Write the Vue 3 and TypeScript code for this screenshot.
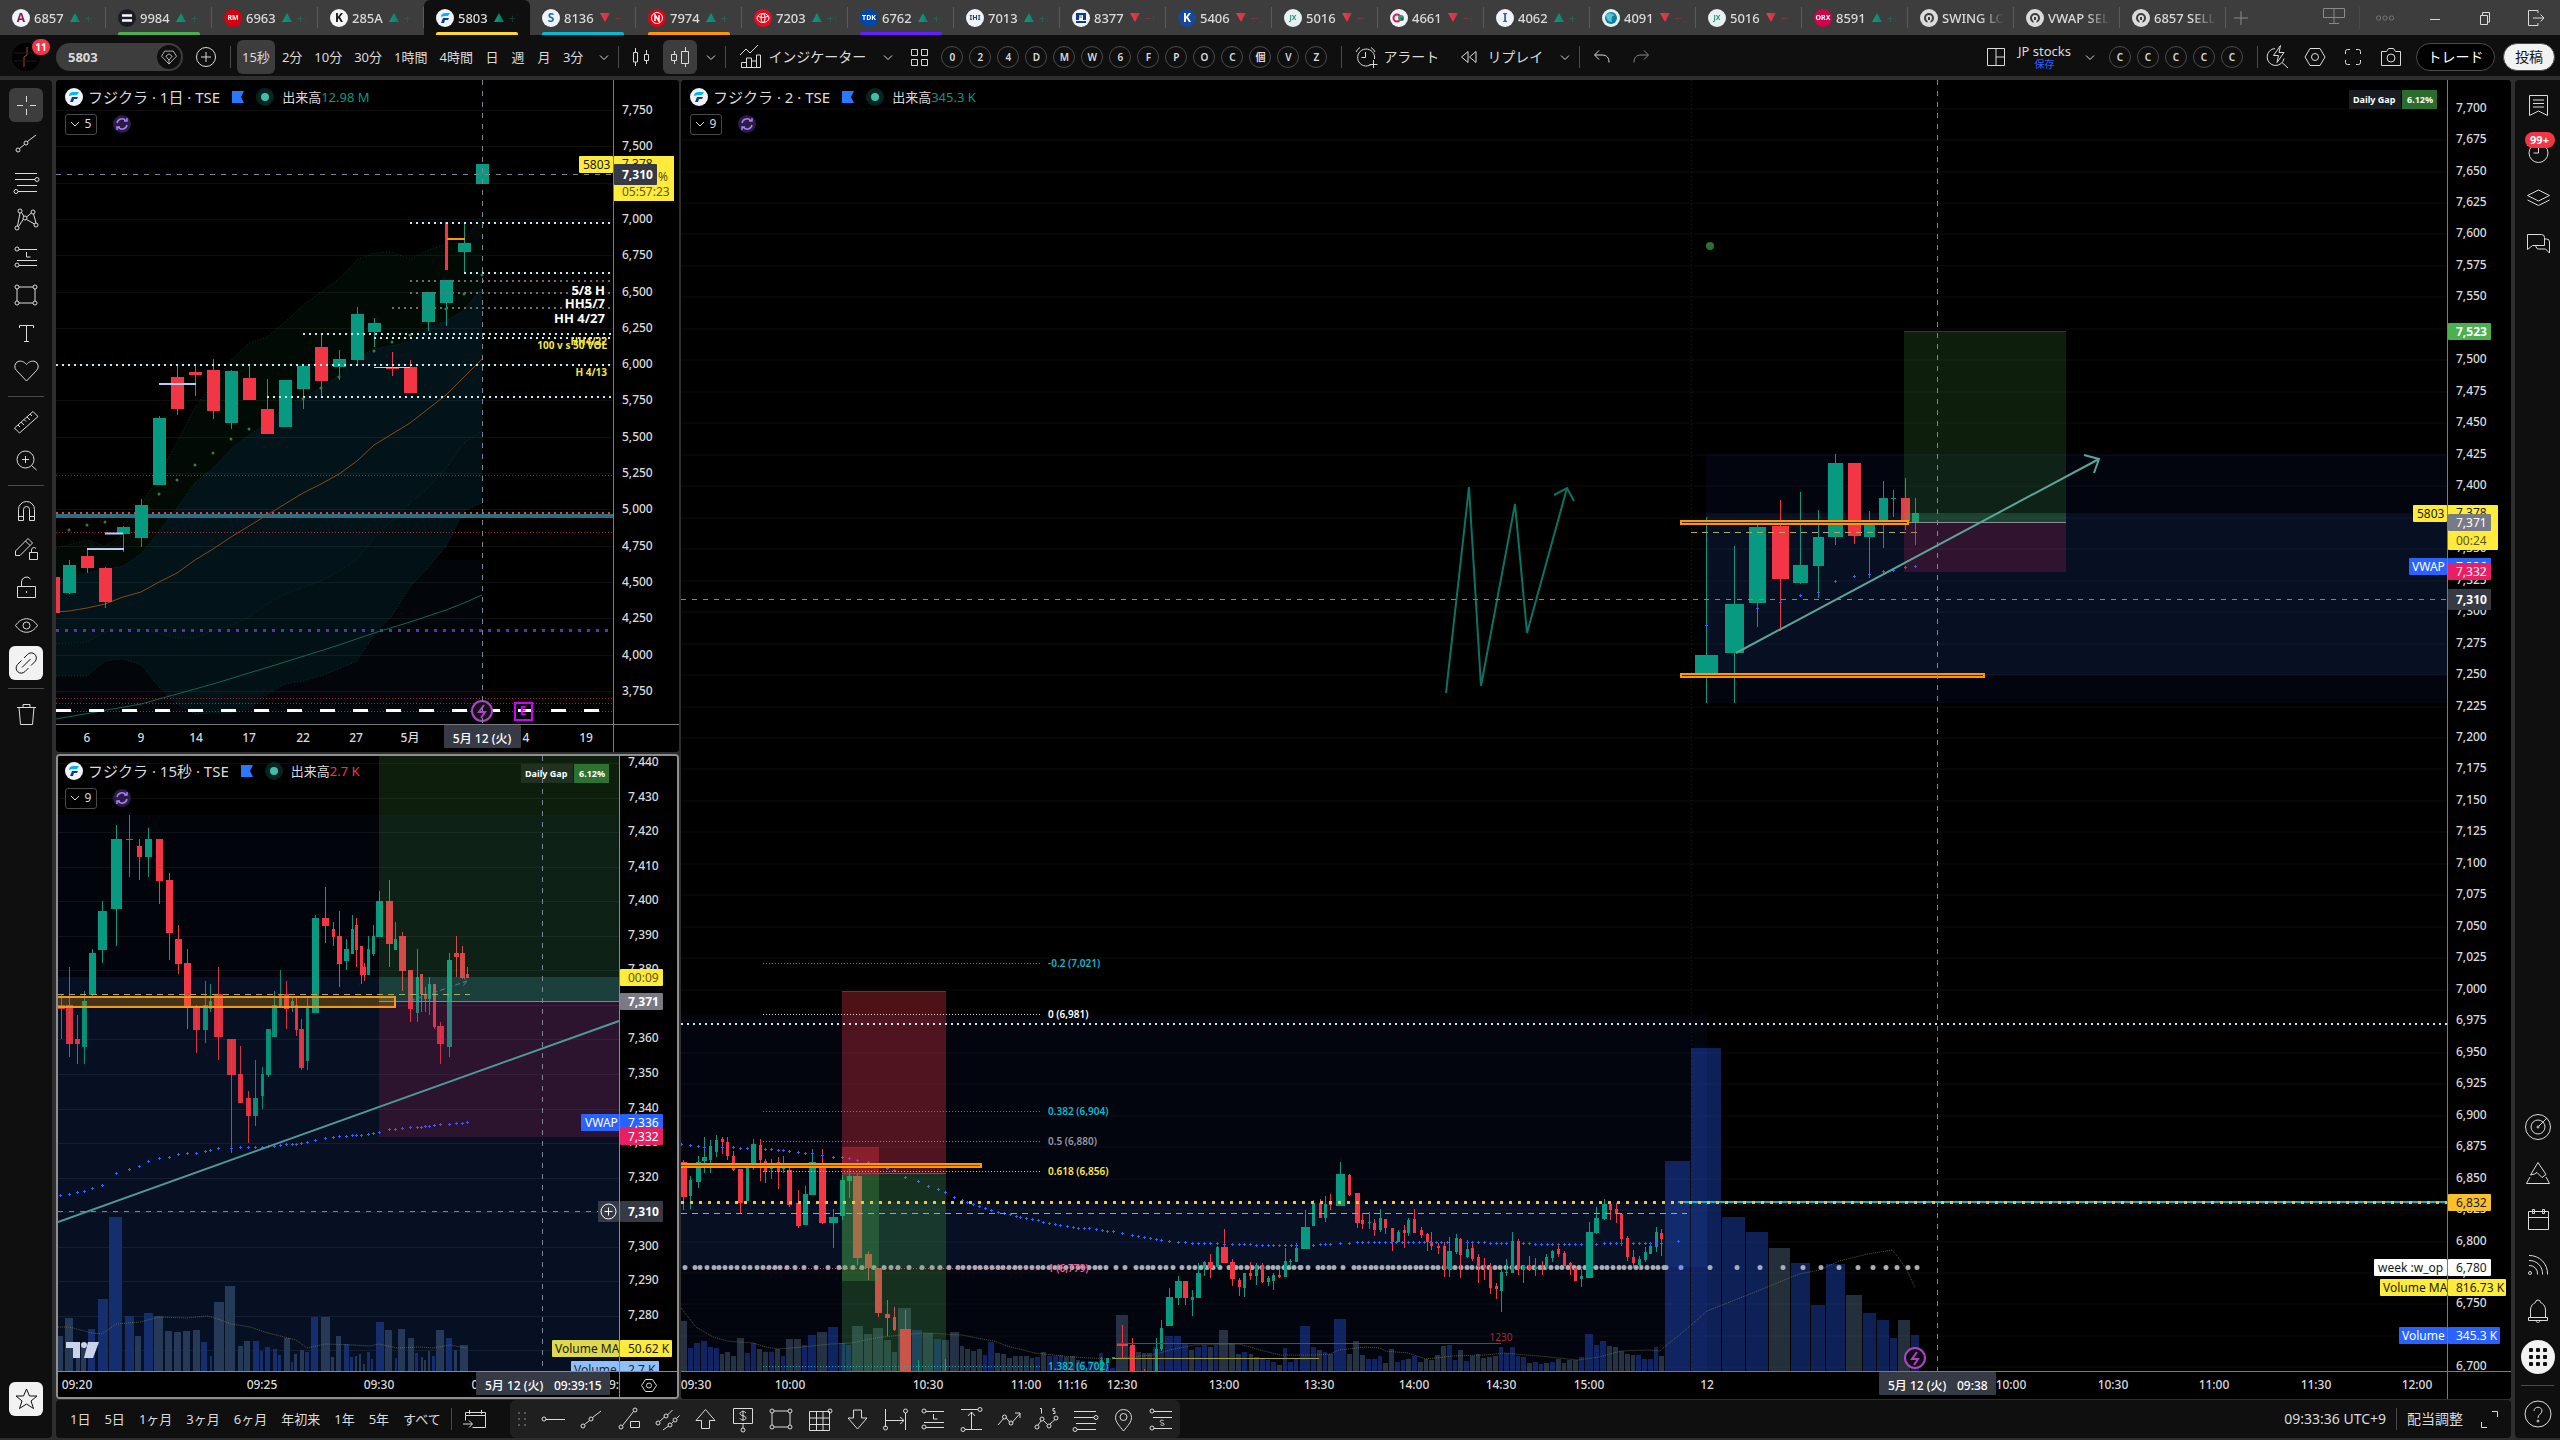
<script setup lang="ts">
type Bar = [number, number, number, number, number, number, number]
type Vol = [number, number, number, number]
interface Frame { x: number; y: number; kx: number; ky: number }
interface Tag { x: number; y: number; w: number; h: number; bg: string; fg?: string; t?: string; tx?: number; b?: boolean }

const UP = '#089981'
const DOWN = '#f23645'

const dayF: Frame = { x: 0, y: 80, kx: 3, ky: 2.306 }
const secF: Frame = { x: 0, y: 740, kx: 3, ky: 2.24 }
const amF: Frame = { x: 680, y: 940, kx: 2.45, ky: 3 }
const pmF: Frame = { x: 1300, y: 940, kx: 2.306, ky: 3 }
const nowF: Frame = { x: 1400, y: 220, kx: 2.063, ky: 3 }

const px = (f: Frame, x: number) => Math.round(f.x + x / f.kx)
const py = (f: Frame, y: number) => Math.round(f.y + y / f.ky)

function candles(f: Frame, rows: Bar[]) {
  return rows.map(([c, w, t, b, wt, wb, up]) => {
    const cx = px(f, c)
    let pw = Math.max(1, Math.round(w / f.kx))
    if (pw > 1 && pw % 2 === 0) pw += 1
    const y = py(f, t)
    const wy = py(f, wt)
    return {
      x: cx - (pw - 1) / 2, w: pw, y, h: Math.max(1, py(f, b) - y),
      cx, wy, wh: Math.max(1, py(f, wb) - wy), c: up ? UP : DOWN,
    }
  })
}
function volumes(f: Frame, rows: Vol[], base: number) {
  return rows.map(([a, b, t, blue]) => {
    const x = px(f, a)
    const y = py(f, t)
    return { x, y, w: Math.max(1, px(f, b) - x), h: base - y, blue: !!blue }
  })
}
function pts(f: Frame, flat: number[]) {
  const out: [number, number][] = []
  for (let i = 0; i < flat.length; i += 2) out.push([px(f, flat[i]), py(f, flat[i + 1])])
  return out
}
const line = (p: [number, number][]) => 'M' + p.map((q) => q.join(' ')).join('L')
const plus = (p: [number, number][]) => p.map(([x, y]) => `M${x - 1} ${y + 0.5}h3M${x + 0.5} ${y - 1}v3`).join('')
const repeat = (from: number, to: number, step: number, y: number) => {
  const out: number[] = []
  for (let x = from; x <= to; x += step) out.push(x, y)
  return out
}

/* ---------- daily ---------- */
const dayCandles = candles(dayF, [
  [170, 15, 1146, 1228, 1146, 1228, 0], [208, 39, 1118, 1183, 1107, 1185, 1], [262, 39, 1098, 1125, 1080, 1137, 0],
  [316, 39, 1125, 1204, 1123, 1218, 0], [370, 39, 1031, 1046, 1028, 1088, 1], [424, 39, 980, 1056, 966, 1077, 1],
  [478, 39, 779, 934, 775, 934, 1], [532, 39, 685, 759, 655, 772, 0], [586, 39, 673, 680, 659, 729, 0],
  [640, 39, 669, 763, 643, 782, 0], [694, 39, 671, 791, 669, 805, 1], [748, 39, 687, 738, 659, 738, 0],
  [802, 39, 759, 816, 689, 816, 0], [856, 39, 692, 800, 692, 800, 1], [910, 39, 659, 713, 659, 759, 1],
  [964, 39, 616, 694, 583, 729, 0], [1018, 39, 643, 662, 622, 692, 1], [1072, 39, 540, 646, 523, 656, 1],
  [1123, 39, 560, 581, 549, 616, 1], [1177, 39, 663, 666, 627, 683, 0], [1231, 39, 662, 722, 646, 722, 0],
  [1285, 39, 489, 558, 489, 579, 1], [1339, 39, 461, 514, 461, 567, 1], [1339, 9, 327, 438, 327, 438, 0],
  [1393, 39, 376, 397, 329, 442, 1], [1447, 39, 194, 240, 194, 240, 1],
])
const dayDots = pts(dayF, [208, 1038, 262, 1027, 316, 1020, 370, 1004, 478, 955, 532, 923, 586, 888, 640, 861, 694, 829, 748, 805, 910, 735, 964, 711, 1018, 686, 1123, 626, 1177, 605, 1231, 589, 1339, 529, 1393, 494, 1447, 450])
const dayMa = line(pts(dayF, [168, 1227, 208, 1225, 262, 1218, 316, 1208, 370, 1193, 424, 1181, 478, 1158, 532, 1136, 586, 1108, 640, 1081, 694, 1054, 748, 1028, 802, 1004, 856, 977, 910, 953, 964, 932, 1018, 908, 1072, 878, 1123, 842, 1177, 816, 1231, 790, 1285, 759, 1339, 726, 1393, 685, 1447, 643]))
const dayLong = line(pts(dayF, [168, 1473, 424, 1439, 640, 1393, 856, 1342, 1018, 1304, 1123, 1275, 1231, 1250, 1339, 1222, 1393, 1206, 1447, 1188]))
const bandTop = pts(dayF, [168, 1080, 262, 1061, 316, 1075, 370, 1050, 424, 980, 478, 910, 532, 835, 586, 755, 640, 700, 694, 645, 748, 607, 802, 593, 856, 558, 910, 520, 964, 490, 1018, 458, 1072, 415, 1123, 400, 1177, 397, 1231, 413, 1285, 392, 1339, 378, 1393, 376, 1447, 309])
const bandIn = pts(dayF, [168, 1155, 262, 1137, 370, 1120, 424, 1094, 532, 987, 586, 930, 640, 895, 694, 850, 748, 818, 802, 790, 856, 757, 910, 730, 964, 710, 1018, 680, 1072, 640, 1123, 620, 1231, 605, 1285, 570, 1339, 555, 1393, 530, 1447, 480])
const bandInLow = pts(dayF, [168, 1300, 262, 1296, 316, 1272, 370, 1265, 424, 1265, 532, 1286, 586, 1286, 640, 1270, 694, 1260, 748, 1238, 802, 1208, 856, 1185, 964, 1155, 1018, 1133, 1072, 1105, 1123, 1055, 1231, 975, 1285, 940, 1339, 895, 1393, 838, 1447, 810])
const bandLow = pts(dayF, [168, 1375, 262, 1375, 316, 1340, 370, 1336, 424, 1350, 478, 1400, 532, 1440, 586, 1462, 640, 1460, 694, 1460, 748, 1450, 802, 1415, 856, 1393, 910, 1387, 964, 1375, 1018, 1358, 1072, 1340, 1123, 1280, 1177, 1237, 1231, 1168, 1285, 1125, 1339, 1075, 1393, 995, 1447, 975])
const area = (a: [number, number][], b: [number, number][]) => line([...a, ...[...b].reverse()]) + 'Z'
const dayAxis = Array.from({ length: 17 }, (_, i) => ({ y: Math.round(110 + i * 36.31), t: (7750 - i * 250).toLocaleString('en-US') }))
const dayTimes: [number, string][] = [[87, '6'], [141, '9'], [196, '14'], [249, '17'], [303, '22'], [356, '27'], [410, '5月'], [526, '4'], [586, '19']]
const dayLevels: [number, number, string][] = [
  [410, 222, '#b9f0f0'], [464, 272, '#b9f0f0'], [410, 280, '#6b6e72'], [410, 292, '#6b6e72'], [392, 307, '#6b6e72'],
  [303, 333, '#b9f0f0'], [374, 337, '#b9f0f0'], [56, 364, '#b9f0f0'], [267, 396, '#b9f0f0'],
]

/* ---------- 15 seconds ---------- */
const secCandles = candles(secF, [
  [183, 18, 594, 603, 572, 670, 0], [208, 21, 594, 681, 508, 710, 0], [232, 15, 670, 681, 616, 726, 0], [253, 15, 585, 688, 562, 726, 1],
  [277, 21, 477, 571, 468, 573, 1], [307, 27, 383, 470, 361, 500, 1], [349, 33, 222, 379, 190, 461, 1], [388, 21, 221, 223, 168, 307, 1],
  [418, 15, 237, 262, 222, 314, 0], [445, 21, 222, 262, 197, 307, 1], [478, 21, 222, 316, 222, 367, 0], [508, 21, 314, 432, 298, 493, 0],
  [535, 21, 446, 502, 414, 524, 0], [562, 21, 500, 598, 468, 647, 0], [589, 21, 598, 650, 594, 701, 0], [616, 15, 594, 650, 540, 679, 1],
  [631, 9, 585, 603, 547, 609, 1], [655, 27, 570, 665, 508, 717, 0], [694, 27, 670, 750, 670, 925, 0], [721, 15, 748, 813, 685, 813, 0],
  [745, 15, 802, 842, 786, 903, 0], [766, 15, 802, 842, 717, 865, 1], [787, 9, 748, 797, 732, 827, 1], [805, 15, 647, 750, 647, 755, 1],
  [823, 15, 594, 665, 562, 665, 1], [841, 9, 570, 598, 515, 600, 1], [859, 15, 569, 603, 540, 647, 0], [877, 9, 585, 598, 576, 609, 1],
  [889, 9, 594, 650, 576, 663, 0], [904, 15, 647, 735, 625, 739, 0], [922, 9, 598, 719, 576, 739, 1], [946, 21, 399, 612, 392, 612, 1],
  [976, 21, 399, 417, 329, 455, 0], [1000, 9, 423, 441, 408, 461, 0], [1018, 12, 439, 502, 383, 553, 0], [1039, 15, 468, 495, 446, 515, 1],
  [1057, 9, 423, 479, 392, 479, 1], [1069, 9, 414, 470, 399, 508, 0], [1084, 9, 461, 526, 461, 547, 0], [1093, 9, 508, 526, 500, 540, 0],
  [1105, 9, 468, 526, 439, 526, 1], [1120, 9, 439, 479, 414, 484, 1], [1138, 21, 361, 441, 338, 441, 1], [1168, 21, 361, 457, 314, 508, 0],
  [1186, 9, 446, 470, 408, 470, 1], [1207, 21, 439, 517, 430, 562, 0], [1231, 15, 515, 603, 515, 632, 0], [1252, 9, 530, 612, 468, 632, 1],
  [1264, 9, 524, 570, 524, 609, 0], [1276, 9, 569, 580, 553, 609, 0], [1288, 9, 547, 580, 531, 616, 1], [1303, 9, 547, 643, 547, 647, 0],
  [1321, 21, 641, 681, 632, 726, 0], [1348, 15, 493, 688, 477, 710, 1], [1369, 15, 477, 486, 439, 531, 0], [1387, 15, 477, 533, 461, 535, 0],
  [1402, 9, 524, 533, 508, 533, 0],
])
const secVol = volumes(secF, [
  [174, 189, 1335, 0], [195, 219, 1295, 0], [228, 240, 1350, 0], [243, 258, 1350, 0], [264, 285, 1319, 1], [294, 324, 1252, 1], [327, 366, 1068, 1],
  [375, 402, 1290, 1], [405, 423, 1335, 0], [432, 459, 1284, 1], [462, 489, 1291, 0], [495, 516, 1324, 0], [522, 543, 1326, 0], [549, 570, 1324, 0],
  [579, 600, 1322, 0], [603, 621, 1348, 1], [630, 636, 1380, 1], [642, 672, 1259, 0], [675, 705, 1223, 0], [714, 729, 1357, 0], [732, 750, 1346, 0],
  [759, 777, 1346, 1], [780, 789, 1369, 1], [795, 810, 1360, 1], [819, 831, 1364, 1], [834, 843, 1378, 1], [852, 870, 1340, 0], [873, 879, 1393, 1],
  [882, 891, 1375, 0], [900, 912, 1366, 0], [915, 927, 1371, 1], [933, 954, 1292, 1], [963, 990, 1292, 0], [993, 1002, 1382, 0], [1008, 1023, 1335, 0],
  [1032, 1047, 1353, 1], [1050, 1059, 1382, 1], [1065, 1071, 1380, 0], [1077, 1083, 1375, 0], [1089, 1095, 1398, 0], [1101, 1110, 1371, 1],
  [1113, 1119, 1387, 1], [1128, 1152, 1304, 1], [1155, 1176, 1322, 0], [1185, 1191, 1384, 1], [1194, 1215, 1319, 0], [1224, 1242, 1340, 0],
  [1245, 1254, 1373, 1], [1263, 1269, 1382, 0], [1272, 1278, 1389, 0], [1284, 1290, 1369, 0], [1296, 1305, 1380, 1], [1308, 1332, 1322, 0],
  [1338, 1356, 1340, 1], [1362, 1371, 1366, 0], [1380, 1403, 1355, 0],
], 1371)
const secVwap = plus(pts(secF, [181, 1020, 208, 1016, 232, 1013, 253, 1011, 277, 1004, 307, 996, 349, 969, 388, 960, 418, 955, 445, 944, 478, 937, 508, 933, 535, 928, 562, 926, 589, 924, 616, 921, 631, 919, 655, 914, 694, 913, 721, 912, 745, 912, 766, 911, 787, 911, 805, 910, 823, 909, 841, 908, 859, 906, 877, 905, 889, 904, 904, 903, 922, 901, 946, 897, 976, 892, 1000, 890, 1018, 888, 1039, 886, 1057, 885, 1069, 884, 1084, 884, 1105, 882, 1120, 881, 1138, 877, 1168, 872, 1186, 871, 1207, 868, 1231, 867, 1252, 866, 1264, 866, 1276, 865, 1288, 864, 1303, 863, 1321, 861, 1348, 861, 1369, 858, 1387, 857, 1402, 856]))
const secVolMa = line(pts(secF, [174, 1315, 208, 1314, 277, 1328, 307, 1330, 349, 1309, 420, 1303, 478, 1293, 560, 1294, 620, 1290, 655, 1297, 694, 1309, 750, 1315, 805, 1328, 889, 1344, 922, 1362, 976, 1353, 1060, 1356, 1110, 1358, 1138, 1352, 1190, 1361, 1260, 1360, 1300, 1361, 1350, 1355, 1402, 1362]))
const secAxis = Array.from({ length: 18 }, (_, i) => ({ y: Math.round(763 + i * 34.55), t: (7440 - i * 10).toLocaleString('en-US') }))
const secTags: Tag[] = [
  { x: 620, y: 969, w: 43, h: 17, bg: '#ffeb3b', fg: '#5c5620', t: '00:09' },
  { x: 620, y: 993, w: 43, h: 17, bg: '#787b86', fg: '#ffffff', t: '7,371', b: true },
  { x: 581, y: 1114, w: 38, h: 17, bg: '#2962ff', fg: '#ffffff', t: 'VWAP', tx: 4 },
  { x: 620, y: 1114, w: 43, h: 17, bg: '#2962ff', fg: '#ffffff', t: '7,336' },
  { x: 620, y: 1128, w: 43, h: 17, bg: '#e91e63', fg: '#ffffff', t: '7,332' },
  { x: 598, y: 1201, w: 21, h: 21, bg: '#363a45' },
  { x: 620, y: 1201, w: 43, h: 21, bg: '#363a45', fg: '#ffffff', t: '7,310', b: true },
  { x: 552, y: 1340, w: 67, h: 17, bg: '#dfd94f', fg: '#1c1c10', t: 'Volume MA', tx: 3 },
  { x: 620, y: 1340, w: 52, h: 17, bg: '#ffeb3b', fg: '#1c1c10', t: '50.62 K' },
  { x: 571, y: 1361, w: 48, h: 17, bg: '#90bff9', fg: '#1c2733', t: 'Volume', tx: 3 },
  { x: 620, y: 1361, w: 39, h: 17, bg: '#90bff9', fg: '#1c2733', t: '2.7 K' },
]

/* ---------- 2 minutes ---------- */
const mainCandles = [
  ...candles(amF, [
    [8, 14, 665, 771, 660, 810, 0], [25, 7, 719, 768, 707, 807, 1], [43, 12, 666, 726, 648, 744, 1], [60, 12, 651, 663, 591, 700, 1],
    [74, 7, 618, 660, 600, 699, 1], [89, 7, 600, 636, 585, 650, 1], [104, 7, 597, 606, 591, 642, 0], [116, 7, 606, 648, 591, 660, 0],
    [131, 8, 648, 690, 633, 693, 0], [148, 12, 687, 789, 687, 822, 0], [165, 7, 684, 783, 684, 783, 1], [180, 12, 612, 684, 597, 690, 1],
    [197, 7, 615, 660, 597, 723, 0], [209, 7, 663, 695, 657, 729, 0], [224, 5, 672, 687, 657, 717, 1], [239, 7, 666, 695, 651, 747, 0],
    [253, 5, 675, 687, 648, 699, 1], [268, 12, 690, 795, 675, 801, 0], [288, 12, 789, 858, 750, 864, 0], [307, 12, 762, 855, 738, 855, 1],
    [324, 17, 666, 765, 627, 765, 1], [349, 17, 675, 849, 627, 852, 0], [376, 22, 831, 849, 807, 924, 1], [398, 12, 720, 828, 704, 840, 1],
    [413, 12, 708, 723, 687, 774, 1], [434, 22, 708, 954, 702, 975, 0], [461, 17, 942, 984, 933, 1020, 0], [486, 17, 984, 1119, 984, 1131, 0],
    [508, 12, 1122, 1134, 1080, 1188, 0], [525, 7, 1131, 1170, 1101, 1173, 0], [552, 27, 1167, 1293, 1110, 1293, 0], [582, 2, 1260, 1293, 1260, 1293, 1],
    [650, 3, 1258, 1293, 1258, 1293, 0], [1032, 5, 1260, 1293, 1250, 1293, 1], [1045, 7, 1255, 1270, 1255, 1270, 1], [1060, 7, 1251, 1256, 1251, 1256, 1],
    [1084, 27, 1209, 1218, 1155, 1255, 0], [1108, 12, 1215, 1293, 1194, 1293, 0], [1138, 2, 1287, 1293, 1287, 1293, 0], [1165, 8, 1227, 1293, 1194, 1293, 1],
    [1179, 7, 1164, 1227, 1140, 1232, 1], [1199, 17, 1071, 1158, 1044, 1158, 1], [1221, 17, 1023, 1074, 1008, 1095, 1], [1238, 12, 1023, 1074, 1023, 1095, 0],
    [1255, 7, 1071, 1080, 1050, 1128, 1], [1270, 12, 999, 1074, 969, 1074, 1], [1285, 7, 966, 984, 963, 1008, 1], [1299, 12, 966, 985, 942, 1014, 0],
    [1315, 7, 921, 981, 918, 981, 1], [1334, 17, 921, 969, 867, 969, 0], [1353, 12, 966, 1017, 957, 1038, 0], [1370, 7, 1020, 1041, 1014, 1068, 0],
    [1383, 7, 999, 1044, 999, 1071, 1], [1397, 7, 999, 1007, 966, 1019, 0], [1412, 7, 975, 1007, 969, 1035, 1], [1427, 7, 975, 1026, 968, 1029, 0],
    [1440, 7, 1014, 1026, 1008, 1038, 1], [1454, 7, 1005, 1023, 1000, 1050, 1], [1468, 7, 1005, 1010, 990, 1014, 0], [1483, 7, 963, 1010, 924, 1012, 1],
    [1495, 5, 963, 966, 957, 980, 1], [1510, 7, 924, 966, 909, 966, 1], [1532, 22, 861, 927, 810, 927, 1], [1552, 7, 789, 858, 780, 858, 1],
  ]),
  ...candles(pmF, [
    [45, 6, 789, 834, 777, 834, 0], [58, 6, 792, 834, 768, 846, 1], [70, 6, 789, 795, 762, 810, 0], [93, 20, 702, 798, 666, 798, 1],
    [114, 7, 705, 765, 702, 768, 0], [131, 11, 759, 849, 759, 864, 0], [144, 6, 840, 852, 819, 867, 0], [158, 6, 846, 849, 816, 867, 1],
    [171, 6, 849, 870, 837, 888, 0], [185, 7, 834, 870, 807, 876, 1], [197, 7, 837, 864, 837, 882, 0], [211, 6, 864, 906, 864, 933, 0],
    [225, 6, 876, 906, 870, 906, 1], [239, 6, 870, 879, 855, 924, 0], [250, 6, 840, 879, 834, 888, 1], [264, 6, 837, 879, 807, 879, 0],
    [278, 6, 870, 885, 861, 894, 0], [292, 6, 882, 906, 879, 933, 0], [303, 6, 906, 918, 876, 930, 0], [318, 6, 918, 924, 909, 942, 0],
    [331, 7, 918, 987, 906, 1011, 0], [344, 11, 933, 987, 891, 1011, 1], [359, 6, 894, 936, 882, 942, 1], [370, 6, 897, 945, 894, 1014, 0],
    [384, 6, 927, 951, 900, 954, 1], [397, 6, 924, 957, 906, 963, 0], [411, 6, 951, 981, 942, 1029, 0], [424, 6, 975, 984, 954, 1020, 0],
    [437, 6, 981, 1044, 969, 1062, 0], [451, 6, 1038, 1047, 1029, 1077, 0], [464, 7, 996, 1053, 987, 1116, 1], [476, 6, 996, 999, 957, 1008, 1],
    [490, 6, 903, 999, 876, 999, 1], [503, 6, 903, 987, 897, 1005, 0], [515, 6, 978, 990, 975, 1029, 1], [529, 6, 975, 987, 948, 993, 0],
    [543, 6, 981, 987, 954, 1008, 1], [557, 6, 981, 985, 963, 1005, 0], [568, 6, 951, 981, 942, 987, 1], [582, 6, 933, 954, 930, 966, 1],
    [596, 6, 927, 942, 918, 951, 0], [609, 6, 939, 978, 933, 978, 0], [622, 6, 969, 978, 966, 1005, 0], [635, 6, 984, 1023, 984, 1023, 0],
    [649, 6, 1008, 1017, 987, 1041, 1], [667, 17, 876, 1014, 846, 1014, 1], [683, 11, 834, 879, 801, 882, 1], [700, 11, 792, 837, 777, 840, 1],
    [716, 6, 792, 810, 786, 840, 0], [728, 6, 807, 822, 789, 849, 0], [741, 6, 822, 897, 822, 918, 0], [755, 6, 894, 951, 888, 963, 0],
    [769, 6, 951, 969, 930, 984, 0], [781, 6, 957, 975, 948, 990, 1], [795, 6, 936, 960, 921, 966, 1], [808, 6, 918, 942, 906, 942, 1],
    [822, 6, 876, 921, 861, 936, 1], [833, 6, 879, 897, 867, 948, 0],
  ]),
  ...candles(nowF, [
    [632, 47, 1305, 1366, 891, 1448, 1], [690, 39, 1152, 1299, 978, 1448, 1], [737, 35, 921, 1149, 912, 1221, 1], [783, 36, 918, 1077, 840, 1232, 0],
    [826, 31, 1035, 1089, 816, 1092, 1], [863, 23, 951, 1038, 870, 1134, 1], [898, 31, 729, 951, 702, 975, 1], [937, 27, 729, 948, 729, 972, 0],
    [968, 23, 903, 951, 873, 1074, 1], [997, 19, 834, 903, 783, 984, 1], [1018, 10, 834, 836, 810, 891, 1], [1041, 18, 834, 903, 774, 930, 0],
    [1063, 15, 879, 906, 834, 975, 1],
  ]),
]
const mainVol = [
  ...volumes(amF, [
    [2, 17, 1144, 0], [20, 32, 1224, 1], [34, 49, 1209, 1], [51, 66, 1203, 1], [69, 81, 1221, 1], [83, 96, 1224, 1], [98, 108, 1242, 0], [110, 122, 1236, 0],
    [125, 137, 1248, 0], [140, 157, 1194, 0], [159, 171, 1239, 1], [174, 186, 1209, 1], [189, 201, 1227, 0], [203, 216, 1236, 0], [218, 230, 1236, 1],
    [233, 245, 1228, 0], [247, 257, 1248, 1], [260, 277, 1197, 0], [279, 296, 1197, 0], [299, 311, 1215, 1], [314, 333, 1185, 1], [336, 360, 1176, 0],
    [363, 387, 1161, 1], [390, 404, 1209, 1], [406, 418, 1215, 1], [421, 448, 1158, 0], [451, 470, 1182, 0], [473, 497, 1164, 0], [500, 517, 1200, 0],
    [519, 532, 1236, 0], [534, 566, 1104, 0], [568, 593, 1170, 1], [595, 620, 1179, 0], [622, 639, 1197, 1], [642, 659, 1200, 0], [661, 684, 1176, 0],
    [686, 696, 1218, 0], [698, 710, 1227, 0], [713, 725, 1233, 0], [728, 740, 1227, 0], [742, 752, 1245, 1], [755, 770, 1206, 1], [772, 784, 1239, 0],
    [786, 799, 1242, 0], [801, 814, 1254, 0], [816, 828, 1248, 0], [831, 841, 1248, 0], [843, 855, 1248, 0], [857, 868, 1255, 0], [870, 882, 1251, 1],
    [884, 897, 1236, 0], [899, 911, 1248, 1], [913, 926, 1248, 1], [928, 938, 1245, 1], [940, 953, 1251, 0], [955, 967, 1248, 0], [970, 980, 1260, 0],
    [982, 992, 1263, 1], [1000, 1010, 1262, 1], [1012, 1022, 1263, 1], [1027, 1036, 1239, 1], [1038, 1050, 1272, 1], [1053, 1066, 1284, 1],
    [1068, 1098, 1125, 0], [1101, 1115, 1221, 0], [1117, 1130, 1236, 0], [1132, 1142, 1239, 0], [1145, 1156, 1239, 0], [1159, 1171, 1221, 1],
    [1173, 1185, 1227, 1], [1188, 1208, 1188, 1], [1210, 1227, 1188, 1], [1230, 1245, 1209, 1], [1247, 1259, 1230, 0], [1262, 1276, 1221, 1],
    [1279, 1290, 1215, 1], [1293, 1305, 1221, 0], [1308, 1318, 1215, 1], [1321, 1343, 1170, 0], [1346, 1360, 1209, 0], [1362, 1375, 1242, 0],
    [1378, 1390, 1236, 1], [1393, 1403, 1242, 0], [1406, 1418, 1251, 0], [1420, 1433, 1254, 1], [1435, 1446, 1260, 1], [1448, 1460, 1266, 1],
    [1463, 1474, 1275, 0], [1477, 1488, 1224, 1], [1490, 1502, 1266, 1], [1504, 1515, 1257, 1], [1519, 1543, 1158, 1],
  ], 1371),
  ...volumes(pmF, [
    [25, 37, 1221, 1], [39, 51, 1230, 0], [53, 63, 1236, 1], [65, 76, 1242, 0], [78, 106, 1137, 1], [108, 120, 1242, 0], [122, 136, 1203, 0],
    [138, 150, 1245, 0], [152, 164, 1257, 1], [166, 178, 1257, 1], [180, 189, 1248, 1], [191, 203, 1269, 0], [205, 217, 1227, 0], [219, 231, 1266, 1],
    [233, 243, 1260, 1], [245, 256, 1257, 0], [258, 270, 1247, 1], [272, 284, 1266, 0], [286, 296, 1257, 0], [298, 309, 1260, 0], [311, 323, 1245, 0],
    [325, 337, 1218, 0], [339, 350, 1215, 1], [352, 362, 1260, 1], [364, 376, 1230, 0], [378, 390, 1263, 1], [392, 404, 1248, 0], [406, 415, 1242, 0],
    [417, 429, 1254, 0], [431, 443, 1251, 0], [445, 457, 1248, 0], [459, 468, 1221, 1], [470, 482, 1239, 1], [484, 496, 1221, 1], [498, 507, 1248, 1],
    [509, 521, 1251, 1], [523, 535, 1269, 0], [537, 549, 1266, 1], [551, 560, 1272, 1], [562, 574, 1269, 0], [576, 588, 1266, 1], [590, 602, 1257, 0],
    [604, 613, 1269, 0], [615, 627, 1260, 0], [629, 641, 1260, 0], [643, 655, 1251, 1], [657, 676, 1182, 1], [678, 689, 1215, 1], [692, 706, 1203, 1],
    [708, 720, 1218, 0], [722, 733, 1221, 0], [735, 747, 1233, 0], [749, 761, 1242, 0], [763, 772, 1245, 0], [774, 786, 1245, 1], [788, 800, 1257, 1],
    [802, 814, 1257, 1], [816, 826, 1221, 1], [828, 839, 1248, 0], [842, 899, 663, 1], [902, 971, 324, 1], [974, 1026, 831, 1], [1028, 1079, 876, 1],
    [1081, 1130, 924, 0], [1132, 1176, 969, 1], [1178, 1211, 1095, 1], [1213, 1257, 972, 1], [1259, 1296, 1065, 0], [1298, 1328, 1119, 1],
    [1330, 1358, 1140, 1], [1360, 1377, 1194, 1], [1379, 1407, 1140, 0], [1409, 1427, 1185, 1],
  ], 1371),
]
const amVwap = pts(amF, [2, 613, 25, 616, 43, 619, 60, 620, 104, 620, 131, 622, 148, 625, 165, 625, 209, 628, 224, 628, 239, 631, 253, 631, 268, 633, 288, 637, 307, 640, 324, 640, 349, 646, 376, 652, 398, 652, 413, 655, 434, 661, 461, 667, 508, 685, 525, 691, 552, 712, 582, 724, 608, 739, 631, 748, 650, 757, 672, 772, 690, 781, 704, 787, 718, 792, 733, 799, 748, 805, 763, 810, 778, 817, 793, 820, 808, 823, 822, 829, 834, 832, 848, 834, 862, 838, 876, 841, 890, 846, 905, 850, 919, 853, 932, 856, 947, 859, 962, 861, 976, 864, 989, 865, 1003, 865, 1018, 868, 1033, 871, 1045, 873, 1060, 874, 1084, 880, 1108, 886, 1123, 888, 1138, 891, 1152, 895, 1165, 898, 1179, 901, 1199, 904, 1221, 907, 1238, 907, 1255, 910, 1270, 910, 1285, 910, 1299, 910, 1315, 910, 1334, 913, 1353, 913, 1370, 913, 1383, 913, 1397, 913, ...repeat(1412, 1512, 14, 916), 1552, 916])
const pmVwap = pts(pmF, [45, 913, 58, 913, 70, 913, 93, 910, 114, 910, ...repeat(131, 350, 13, 907), 384, 907, 397, 907, 411, 907, 424, 907, 437, 910, 451, 910, 464, 910, 476, 910, 515, 910, 529, 910, ...repeat(543, 650, 13, 913), 683, 913, 700, 910, 716, 910, 728, 910, 741, 910, 769, 910, 781, 910, 795, 910, 808, 910, 822, 910, 833, 910, 872, 904])
const nowVwap = pts(nowF, [632, 1216, 737, 1165, 783, 1147, 826, 1126, 863, 1117, 898, 1084, 937, 1069, 968, 1063, 997, 1054, 1018, 1050, 1041, 1042, 1063, 1039])
const mainVwap = plus([...amVwap, ...pmVwap, ...nowVwap])
const weekDots: number[] = [
  ...[13, 36, 50, 67, 83, 96, 110, 124, 140, 157, 172, 189, 203, 217, 232, 246, 261, 282, 305, 334, 362, 390, 405, 423, 447, 476, 500, 517, 535, 560, 592, 618, 637, 658, 680].map((x) => px(amF, x)),
  ...Array.from({ length: 26 }, (_, i) => px(amF, 694 + i * 14)),
  ...[1069, 1091, 1118, 1132, 1146, 1160, 1175, 1191, 1207, 1229, 1248, 1262, 1276, 1290, 1305, 1322, 1345].map((x) => px(amF, x)),
  ...Array.from({ length: 13 }, (_, i) => px(amF, 1362 + i * 13)),
  ...[2, 19, 41, 53, 66, 79, 100, 124].map((x) => px(pmF, x)),
  ...Array.from({ length: 55 }, (_, i) => px(pmF, 137 + i * 13)),
  ...[843, 879, 946, 1008, 1061, 1114, 1160, 1202, 1243, 1287, 1322, 1352, 1377, 1402, 1423].map((x) => px(pmF, x)),
]
const mainVolMa = line([
  ...pts(amF, [2, 1105, 40, 1160, 80, 1190, 115, 1204, 180, 1210, 210, 1222, 240, 1228, 300, 1222, 370, 1212, 420, 1209, 480, 1195, 560, 1183, 600, 1179, 690, 1184, 740, 1198, 770, 1202, 800, 1218, 870, 1240, 960, 1250, 1050, 1256, 1100, 1250, 1160, 1246, 1200, 1230, 1260, 1215, 1370, 1213, 1420, 1230, 1470, 1246, 1560, 1244]),
  ...pts(pmF, [70, 1242, 90, 1230, 150, 1222, 185, 1224, 195, 1232, 250, 1240, 290, 1256, 350, 1248, 430, 1246, 470, 1240, 550, 1248, 640, 1260, 690, 1250, 740, 1234, 800, 1230, 830, 1232, 835, 1228, 900, 1157, 938, 1113, 1060, 1050, 1150, 1003, 1200, 990, 1243, 964, 1310, 942, 1366, 931, 1380, 950, 1400, 990, 1418, 1045]),
])
const mainAxis = Array.from({ length: 41 }, (_, i) => ({ y: Math.round(108.6 + i * 31.47), t: (7700 - i * 25).toLocaleString('en-US') }))
const mainTimes: [number, string][] = [[696, '09:30'], [790, '10:00'], [928, '10:30'], [1026, '11:00'], [1072, '11:16'], [1122, '12:30'], [1224, '13:00'], [1319, '13:30'], [1414, '14:00'], [1501, '14:30'], [1589, '15:00'], [1707, '12'], [2011, '10:00'], [2113, '10:30'], [2214, '11:00'], [2316, '11:30'], [2417, '12:00']]
const fibs: [number, string, string][] = [[963, '#00bcd4', '-0.2 (7,021)'], [1014, '#ffffff', '0 (6,981)'], [1111, '#00bcd4', '0.382 (6,904)'], [1141, '#9598a1', '0.5 (6,880)'], [1171, '#ffeb3b', '0.618 (6,856)'], [1268, '#f06292', '1 (6,779)'], [1366, '#00bcd4', '1.382 (6,702)']]
const mainTags: Tag[] = [
  { x: 2448, y: 323, w: 43, h: 17, bg: '#4caf50', fg: '#ffffff', t: '7,523', b: true },
  { x: 2413, y: 505, w: 34, h: 17, bg: '#ffeb3b', fg: '#1c1c10', t: '5803', tx: 4 },
  { x: 2448, y: 505, w: 50, h: 45, bg: '#ffeb3b', fg: '#1c1c10' },
  { x: 2448, y: 505, w: 43, h: 16, bg: '#ffeb3b', fg: '#1c1c10', t: '7,378' },
  { x: 2448, y: 532, w: 43, h: 17, bg: '#ffeb3b', fg: '#5c5620', t: '00:24' },
  { x: 2448, y: 514, w: 43, h: 17, bg: '#787b86', fg: '#ffffff', t: '7,371' },
  { x: 2409, y: 558, w: 38, h: 17, bg: '#2962ff', fg: '#ffffff', t: 'VWAP', tx: 3 },
  { x: 2448, y: 558, w: 43, h: 17, bg: '#2962ff', fg: '#ffffff', t: '7,336' },
  { x: 2448, y: 563, w: 43, h: 17, bg: '#e91e63', fg: '#ffffff', t: '7,332' },
  { x: 2448, y: 589, w: 43, h: 21, bg: '#363a45', fg: '#ffffff', t: '7,310', b: true },
  { x: 2448, y: 1194, w: 43, h: 17, bg: '#fbc02d', fg: '#1c1c10', t: '6,832' },
  { x: 2374, y: 1259, w: 73, h: 17, bg: '#ffffff', fg: '#131722', t: 'week :w_op', tx: 4 },
  { x: 2448, y: 1259, w: 43, h: 17, bg: '#ffffff', fg: '#131722', t: '6,780' },
  { x: 2380, y: 1279, w: 67, h: 17, bg: '#ffeb3b', fg: '#1c1c10', t: 'Volume MA', tx: 3 },
  { x: 2448, y: 1279, w: 58, h: 17, bg: '#ffeb3b', fg: '#1c1c10', t: '816.73 K' },
  { x: 2399, y: 1327, w: 48, h: 17, bg: '#2962ff', fg: '#ffffff', t: 'Volume', tx: 3 },
  { x: 2448, y: 1327, w: 52, h: 17, bg: '#2962ff', fg: '#ffffff', t: '345.3 K' },
]
const dayTags: Tag[] = [
  { x: 579, y: 156, w: 34, h: 17, bg: '#ffeb3b', fg: '#1c1c10', t: '5803', tx: 4 },
  { x: 614, y: 156, w: 60, h: 45, bg: '#ffeb3b' },
  { x: 614, y: 156, w: 60, h: 16, bg: '#ffeb3b', fg: '#1c1c10', t: '7,378' },
  { x: 650, y: 168, w: 24, h: 17, bg: '#ffeb3b', fg: '#5c5620', t: '%' },
  { x: 614, y: 182, w: 60, h: 19, bg: '#ffeb3b', fg: '#5c5620', t: '05:57:23' },
  { x: 614, y: 164, w: 43, h: 21, bg: '#363a45', fg: '#ffffff', t: '7,310', b: true },
]

/* ---------- window tabs ---------- */
interface Tab { t: string; g: string; bg: string; fg: string; dir?: number; c?: string; u?: string; active?: boolean }
const tabs: Tab[] = [
  { t: '6857', g: 'A', bg: '#f0f3fa', fg: '#8d1b4f', dir: 1, c: '+1' },
  { t: '9984', g: '=', bg: '#1b1f24', fg: '#ffffff', dir: 1, c: '+2', u: '#4caf50' },
  { t: '6963', g: 'RM', bg: '#d7000f', fg: '#ffffff', dir: 1, c: '+0' },
  { t: '285A', g: 'K', bg: '#f5f5f5', fg: '#111111', dir: 1, c: '+1' },
  { t: '5803', g: 'F', bg: '#f0f3fa', fg: '#1565c0', dir: 1, c: '+7', u: '#fdd835', active: true },
  { t: '8136', g: 'S', bg: '#f0f3fa', fg: '#1a6fb5', dir: 0, c: '−2', u: '#00bcd4' },
  { t: '7974', g: 'N', bg: '#e60012', fg: '#ffffff', dir: 1, c: '+1', u: '#ff9800' },
  { t: '7203', g: 'T', bg: '#eb0a1e', fg: '#ffffff', dir: 1, c: '+0' },
  { t: '6762', g: 'TDK', bg: '#0046ad', fg: '#ffffff', dir: 1, c: '+6', u: '#651fff' },
  { t: '7013', g: 'IHI', bg: '#f0f3fa', fg: '#17456b', dir: 1, c: '+6' },
  { t: '8377', g: 'H', bg: '#f0f3fa', fg: '#0b3a8c', dir: 0, c: '−0' },
  { t: '5406', g: 'K', bg: '#16499c', fg: '#ffffff', dir: 0, c: '−3' },
  { t: '5016', g: 'JX', bg: '#e8f1f2', fg: '#2b9186', dir: 0, c: '−1' },
  { t: '4661', g: 'O', bg: '#f0f3fa', fg: '#c2185b', dir: 0, c: '−0' },
  { t: '4062', g: 'I', bg: '#f0f3fa', fg: '#3a66a8', dir: 1, c: '+7' },
  { t: '4091', g: 'e', bg: '#e3f2f7', fg: '#0d7f9c', dir: 0, c: '−2' },
  { t: '5016', g: 'JX', bg: '#e8f1f2', fg: '#2b9186', dir: 0, c: '−1' },
  { t: '8591', g: 'ORX', bg: '#d1004b', fg: '#ffffff', dir: 1, c: '+0' },
  { t: 'SWING LON', g: '', bg: '#dbdbdb', fg: '#3d3d3d' },
  { t: 'VWAP SELL', g: '', bg: '#dbdbdb', fg: '#3d3d3d' },
  { t: '6857 SELL', g: '', bg: '#dbdbdb', fg: '#3d3d3d' },
]
/* drawn emblems for the coins that carry no lettering */
const emblems: Record<string, string> = {
  '9984': '<path d="M4 6.500h10M4 11.500h10" stroke="#fff" stroke-width="2.500"/>',
  '7974': '<circle cx="9" cy="9" r="5.500" fill="none" stroke="#fff"/><path d="M7 12V6l4 6V6" fill="none" stroke="#fff" stroke-width="1.500"/>',
  '7203': '<ellipse cx="9" cy="9" rx="6" ry="4.500" fill="none" stroke="#fff"/><ellipse cx="9" cy="9" rx="2" ry="4.500" fill="none" stroke="#fff"/><path d="M4 7c3 2 7 2 10 0" fill="none" stroke="#fff"/>',
  '8377': '<path d="M4 4h10v7h-3V6H7v5H4z" fill="#0b3a8c"/><path d="M7 6h3v3H7z" fill="#d9b65a"/><path d="M4 13h10" stroke="#0b3a8c" stroke-width="2"/>',
  '4661': '<circle cx="7" cy="9" r="3.500" fill="none" stroke="#d81b60" stroke-width="2"/><circle cx="11" cy="9" r="3" fill="#2e9e5b"/><circle cx="12" cy="10" r="1.500" fill="#1e56b0"/>',
  '4091': '<circle cx="9" cy="9" r="6" fill="#0d7f9c"/><path d="M4 6c3-3 7-2 9 1-3-1-4 2-3 6-4 0-6-3-6-7z" fill="#53c6de"/>',
}

const intervals = ['15秒', '2分', '10分', '30分', '1時間', '4時間', '日', '週', '月', '3分']
const presets = ['0', '2', '4', 'D', 'M', 'W', '6', 'F', 'P', 'O', 'C', '個', 'V', 'Z']
const ranges = ['1日', '5日', '1ヶ月', '3ヶ月', '6ヶ月', '年初来', '1年', '5年', 'すべて']

/* ---------- icons, 28 unit grid ---------- */
const o = (x: number, y: number, r = 2) => `M${x - r} ${y}a${r} ${r} 0 1 0 ${2 * r} 0a${r} ${r} 0 1 0 ${-2 * r} 0`
const I: Record<string, string> = {
  cross: 'M14.5 5v6M14.5 18v6M5 14.5h6M18 14.5h6',
  trend: o(6, 21) + o(14, 14) + 'M7.5 19.5l5-4M15.5 12.500L24 6',
  fib: 'M3 6.500h22M3 12.500h20M5 18.500h20M6 24.500h19' + o(25, 12.5) + o(4, 24.5),
  pattern: o(5, 23) + o(8, 6) + o(13, 13) + o(21, 7) + o(24, 20) + 'M5.500 21L8 8M9.500 7.500L12 11.500M14.500 12L19.500 8M21.500 9L24 18M14.500 14.500L22.500 19M11.500 14L6.500 21.500',
  long: o(5, 6) + o(5, 22) + 'M7 6.500h18M5 17.500h20M7 22.500h18M14.500 9v5h4',
  rect: o(5, 6) + o(23, 6) + o(5, 22) + o(23, 22) + 'M7 6h14M7 22h14M5 8v12M23 8v12',
  text: 'M7.500 9V6.500h14V9M14.500 6.500v16M12 22.500h5',
  heart: 'M14.500 24L4.500 13.500a5.500 5.500 0 0 1 1.500-9c3-1 6 0 8.500 3 2.500-3 5.500-4 8.500-3a5.500 5.500 0 0 1 1.500 9z',
  ruler: 'M2.500 20L21 3.500l5 5L7.500 25zM6 17l2 2M9 14l3 3M12 11.500l2 2M15 9l3 3M18 6l2 2',
  zoom: o(13.5, 13.5, 8.5) + 'M19.500 19.500l5 4.500M10 13.500h7M13.500 10v7',
  magnet: 'M6.500 23.500v-11a8 8 0 0 1 16 0v11h-5v-11a3 3 0 0 0-6 0v11zM6.500 19.500h5M17.500 19.500h5',
  pencil: 'M3.500 20.500V16L16 3.500l4.500 4.500L8 20.500zM13.500 6L18 10.500M17.500 17.500h8v7h-8zM19.500 17.500v-2.500a2.500 2.500 0 0 1 4.500-1.500',
  lock: 'M5.500 13.500h18v11h-18zM9.500 13.500V9a5 5 0 0 1 9-3M14.500 18v2',
  eye: 'M3.500 14.500c6-9 16-9 22 0c-6 9-16 9-22 0z' + o(14.5, 14.5, 3.5),
  link: 'M12 9l3.500-3.500a5 5 0 0 1 7.500 7L19 16.500M16.500 19L13 22.500a5 5 0 0 1-7.500-7L9.500 11.500M10 18.500l8.500-8.500',
  trash: 'M5 7.500h19M11 7V4.500h7V7M7 7.500l1.500 17h12l1.500-17',
  star: 'M14.500 4l3 7h7.500l-6 5 2.500 7.500-7-4.500-7 4.500 2.500-7.500-6-5h7.500z',
  chev: 'M10 12.500l4 4 4-4',
  plusC: o(14, 14, 9.5) + 'M14 9v10M9 14h10',
  diamond: 'M8.500 6.500h11l4 6.500-9.500 10L4.500 13zM14 18v5M10 13l4-3 4 3-4 5z',
  bars: 'M8.500 5v4M8.500 19v4M6.500 9.500h4v9.500h-4zM19.500 7v4M19.500 17v4M17.500 11.500h4v6h-4z',
  hollow: 'M8.500 8v3M8.500 17v4M5.500 11.500h5v6h-5zM19.500 4v4M19.500 20v4M15.500 8.500h7v12h-7z',
  ind: 'M4 12l6-6 4 4 8-8M5.500 24.500v-5h5v5zM10.500 24.500V15h5v9.500M15.500 18h5v6.500M20.500 24.500V12h4v12.500H5.500',
  grid: 'M6.500 6.500h6v6h-6zM16.500 6.500h6v6h-6zM6.500 16.500h6v6h-6zM16.500 16.500h6v6h-6z',
  alarm: 'M19 21.500a8.500 8.500 0 1 1 3.500-5.500M13.500 9v5.500h-4M4 9a10 10 0 0 1 4-4.500M19 4.500A10 10 0 0 1 23 9M21.500 17v8M17.500 21.500h8',
  replay: 'M13 8.500L6.500 14l6.500 5.500zM21 8.500L14.500 14l6.500 5.500z',
  undo: 'M11 7.500l-4.500 4.500 4.500 4.500M7 12h7c5 0 7 3 7 7.500',
  redo: 'M17 7.500l4.500 4.500-4.500 4.500M21 12h-7c-5 0-7 3-7 7.500',
  layout: 'M5.500 5.500h17v17h-17zM14 5.500v17M14 14h8.500',
  quick: 'M19 19.500l6 5.500M12 5.500a8.500 8.500 0 1 0 9 10M17.500 2.500l-7 10h5l-1.500 7 7-10h-5z',
  gear: 'M9 5.500h10l5 8.500-5 8.500H9L4 14z' + o(14, 14, 3.5),
  full: 'M6.500 11V8.500a2 2 0 0 1 2-2H11M17 6.500h2.500a2 2 0 0 1 2 2V11M21.500 17v2.500a2 2 0 0 1-2 2H17M11 21.500H8.500a2 2 0 0 1-2-2V17',
  camera: 'M4.500 8.500h5l2-3h5l2 3h5v14h-19z' + o(14, 15, 4),
  panel: 'M3.500 4.500h21v9h-21zM14 4.500v15M9 19.500h10',
  dots3: o(5, 14, 3) + o(14, 14, 3) + o(23, 14, 3),
  min: 'M9 15.500h10',
  restore: 'M9.500 11.500h7v9h-7zM11.500 11V8.500h7v9.500H17',
  exit: 'M17 9V6.500H7.500v15H17V19M12 14h11M19.500 10.500L23 14l-3.500 3.500',
  add: 'M14 7v14M7 14h14',
  list: 'M5.500 4.500h18v20l-9-4.500-9 4.500zM9 9h11M9 12.500h11M9 16h11',
  clock: o(14.500, 16, 9.5) + 'M14.500 10v6h-5M3 9l4-4',
  layers: 'M3.500 12.500L14.500 7l11 5.500-11 5.500zM3.500 17l11 5.500L25.500 17',
  chat: 'M3.500 5.500h14a3 3 0 0 1 3 3v8h-12l-5 4zM20.500 10h2a3 3 0 0 1 3 3v11l-4-4h-8l-2-3',
  radar: o(14, 14, 12.5) + o(14, 14, 7) + o(14, 14, 1) + 'M15 13l8-8',
  peak: 'M14 3.500l8 12-4 3-5-5-2.500 1.500L6.500 16zM6 18l-3.500 6.500h23L22 18',
  cal: 'M4.500 6.500h20v18h-20zM4.500 12.500h20M8.500 4.500h2v4h-2zM18.500 4.500h2v4h-2z',
  rss: o(6, 22, 1.5) + 'M5 14.500a8 8 0 0 1 8.500 9M5 9.500a13 13 0 0 1 13.500 14M5 4.500a18 18 0 0 1 18.500 19',
  bell: 'M6.500 20v-7c0-4 2.500-6.500 5-7.500a2.500 2.500 0 0 1 5 0c2.500 1 5 3.500 5 7.500v7M4.500 20.500h19v3h-19zM12 24c1 2 3 2 4 0',
  help: o(14, 14, 13) + 'M10 11c0-5 8-5 8 0 0 3-4 3-4 7' + o(14, 21, 1),
  goto: 'M4.500 10.500h20v12h-13M4.500 10.500v5M8.500 5v4M20.500 5v4M4.500 10.500v-3h20v3M2 19h9M8 15.500l3.500 3.500L8 22.500',
  hray: o(5, 14) + 'M7 14.500h19',
  brush: o(6, 22) + o(20, 5) + 'M7.500 20.500L18.500 6.500M15.500 16.500h9v6h-9z',
  para: o(5, 18) + o(13, 11) + o(17, 20) + o(22, 15) + 'M6.500 16.500l5-4.500M14.500 10l5-5M10 25l5.500-4M18.500 18.500l2-2M23.500 13.500l3-3',
  up: 'M14.500 4.500L24 15.500h-5.500v8h-8v-8H5z',
  price: 'M4.500 3.500h19v15h-19zM14 18.500V23' + o(14, 25) + 'M17 8c-1-2-6-2-6 .5s6 2 6 4.500-5 2.500-6 .500M14 5.500v10.500',
  table: 'M4.500 6.500h20v19h-20zM11.500 6.500v19M18 6.500v19M4.500 13h20M4.500 19.500h20' + o(25, 6),
  down: 'M10.500 5v8H5l9.500 11L24 13h-5.500V5z',
  hmeas: 'M4.500 4v18M24.500 8v17M4.500 15.500h18M19 12l4 3.500-4 3.500' + o(4.500, 23) + o(24.500, 6),
  vmeas: 'M4 4.500h17M8 24.500h17M14.500 7v17M11 11l3.500-4 3.500 4' + o(23, 4.500) + o(6, 24.500),
  short: o(5, 6) + o(5, 23) + 'M7 6.500h18M6 12.500h19M7 23.500h18M16.500 15.500c-2-1-4 0-3 1.500s4 1 3.500 2.500-2.500 1-3.500 0',
  zig: 'M3 20l6-7M11 12.500l4 5M17 17.500l8-9M20 8h5v5' + o(9.500, 12) + o(16, 18),
  waves: o(4, 22) + o(9, 14) + o(16, 21) + o(23, 13) + 'M5 20l3-4M10.500 15.500l4 4M17 19l5-4.500M7 3.500h1.500v5M22 3.500h-2v2.500h2v2.500h-2',
  pin: 'M14.500 26c-4-5-8-9-8-13.500a8 8 0 0 1 16 0C22.500 17 18.500 21 14.500 26z' + o(14.500, 12, 3.5),
  expand: 'M17 6.500h5.500V12M12 22.500H6.500V17',
}
const leftTools = ['cross', 'trend', 'fib', 'pattern', 'long', 'rect', 'text', 'heart', '|', 'ruler', 'zoom', '|', 'magnet', 'pencil', 'lock', 'eye', 'link', '|', 'trash']
const drawTools = ['hray', 'trend', 'brush', 'para', 'up', 'price', 'rect', 'table', 'down', 'hmeas', 'long', 'vmeas', 'zig', 'waves', 'fib', 'pin', 'short']
const rightTop = ['list', 'clock', 'layers', 'chat']
const rightLow = ['radar', 'peak', 'cal', 'rss', 'bell']
const legends = [
  { k: 'p1', name: 'フジクラ · 1日 · TSE', v: '12.98 M', n: '5', down: false },
  { k: 'p2', name: 'フジクラ · 15秒 · TSE', v: '2.7 K', n: '9', down: true },
  { k: 'p3', name: 'フジクラ · 2 · TSE', v: '345.3 K', n: '9', down: false },
]
</script>

<template>
  <div class="app">
    <header class="tabs">
      <a v-for="(t, i) in tabs" :key="i" href="#" class="tab" :class="{ active: t.active }">
        <span class="tab-in">
          <span class="coin" :class="{ tiny: t.g.length > 1 }" :style="{ background: t.bg, color: t.fg }">
            <svg v-if="t.active" viewBox="0 0 18 18"><path d="M5 8c0-3 2-4 4-4h5l-2 3H8z" fill="#00b8f0" /><path d="M5 14l2-5h6l-1 2H9l-1 3z" fill="#0b3a9c" /></svg>
            <svg v-else-if="!t.g" viewBox="0 0 18 18"><circle cx="9" cy="9" r="4" fill="none" stroke="#3d3d3d" stroke-width="2" /><path d="M9 8v6" stroke="#dbdbdb" stroke-width="3" /><path d="M9 8v3" stroke="#3d3d3d" stroke-width="2" /></svg>
            <svg v-else-if="emblems[t.t]" viewBox="0 0 18 18" v-html="emblems[t.t]"></svg>
            <template v-else>{{ t.g }}</template>
          </span>
          <span class="tab-t">{{ t.t }}</span>
          <i v-if="t.c" :class="t.dir ? 'tri-u' : 'tri-d'"></i>
          <span v-if="t.c" class="chg" :class="{ neg: !t.dir }">{{ t.c }}</span>
        </span>
        <i v-if="t.u" class="under" :style="{ background: t.u }"></i>
      </a>
      <button class="add"><svg class="ic" viewBox="0 0 28 28"><path :d="I.add" /></svg></button>
      <div class="win">
        <button class="dim"><svg class="ic" viewBox="0 0 28 28"><path :d="I.panel" /></svg></button>
        <i class="sep"></i>
        <button class="dim"><svg class="ic small" viewBox="0 0 28 28"><path :d="I.dots3" /></svg></button>
        <button><svg class="ic" viewBox="0 0 28 28"><path :d="I.min" /></svg></button>
        <button><svg class="ic" viewBox="0 0 28 28"><path :d="I.restore" /></svg></button>
        <button><svg class="ic" viewBox="0 0 28 28"><path :d="I.exit" /></svg></button>
      </div>
    </header>

    <div class="bar">
      <div class="avatar">
        <svg viewBox="0 0 28 28"><circle cx="14" cy="14" r="14" fill="#000" /><path d="M12 24V14l3-2V4" fill="none" stroke="#b3452b" /><path d="M2 10h24M2 18h24" stroke="#1c1c1c" /></svg>
        <b>11</b>
      </div>
      <label class="search"><input value="5803" aria-label="シンボル" /><span><svg class="ic" viewBox="0 0 28 28"><path :d="I.diamond" /></svg></span></label>
      <button class="w34"><svg class="ic" viewBox="0 0 28 28"><path :d="I.plusC" /></svg></button>
      <i class="sep s1"></i>
      <button v-for="(n, i) in intervals" :key="n" class="int" :class="{ on: i === 0 }">{{ n }}</button>
      <button class="w28"><svg class="ic" viewBox="0 0 28 28"><path :d="I.chev" /></svg></button>
      <i class="sep"></i>
      <button class="w44"><svg class="ic" viewBox="0 0 28 28"><path :d="I.bars" /></svg></button>
      <button class="w34 on"><svg class="ic" viewBox="0 0 28 28"><path :d="I.hollow" /></svg></button>
      <button class="w28"><svg class="ic" viewBox="0 0 28 28"><path :d="I.chev" /></svg></button>
      <i class="sep"></i>
      <button class="lab"><svg class="ic" viewBox="0 0 28 28"><path :d="I.ind" /></svg>インジケーター</button>
      <button class="w28"><svg class="ic" viewBox="0 0 28 28"><path :d="I.chev" /></svg></button>
      <button class="w34"><svg class="ic" viewBox="0 0 28 28"><path :d="I.grid" /></svg></button>
      <div class="pre"><button v-for="p in presets" :key="p">{{ p }}</button></div>
      <i class="sep"></i>
      <button class="lab tight"><svg class="ic" viewBox="0 0 28 28"><path :d="I.alarm" /></svg>アラート</button>
      <button class="lab"><svg class="ic" viewBox="0 0 28 28"><path :d="I.replay" /></svg>リプレイ</button>
      <button class="w28"><svg class="ic" viewBox="0 0 28 28"><path :d="I.chev" /></svg></button>
      <i class="sep"></i>
      <button class="w44"><svg class="ic" viewBox="0 0 28 28"><path :d="I.undo" /></svg></button>
      <button class="w34 dim"><svg class="ic" viewBox="0 0 28 28"><path :d="I.redo" /></svg></button>
      <div class="right">
        <button class="w34"><svg class="ic" viewBox="0 0 28 28"><path :d="I.layout" /></svg></button>
        <button class="stack"><span>JP stocks</span><em>保存</em></button>
        <button class="w28"><svg class="ic" viewBox="0 0 28 28"><path :d="I.chev" /></svg></button>
        <div class="pre"><button v-for="p in 5" :key="p">C</button></div>
        <i class="sep"></i>
        <button class="w38"><svg class="ic" viewBox="0 0 28 28"><path :d="I.quick" /></svg></button>
        <button class="w38"><svg class="ic" viewBox="0 0 28 28"><path :d="I.gear" /></svg></button>
        <button class="w38"><svg class="ic" viewBox="0 0 28 28"><path :d="I.full" /></svg></button>
        <button class="w38"><svg class="ic" viewBox="0 0 28 28"><path :d="I.camera" /></svg></button>
        <button class="pill">トレード</button>
        <button class="pill white">投稿</button>
      </div>
    </div>

    <div class="body">
      <nav class="side">
        <template v-for="(t, i) in leftTools" :key="i">
          <hr v-if="t === '|'" />
          <button v-else :class="{ on: t === 'cross', lit: t === 'link' }"><svg class="ic" viewBox="0 0 28 28"><path :d="I[t]" /></svg></button>
        </template>
        <button class="lit end"><svg class="ic" viewBox="0 0 28 28"><path :d="I.star" /></svg></button>
      </nav>

      <main class="center">
        <div class="panes">
          <section v-for="l in legends" :key="l.k" class="pane" :class="l.k">
            <!-- daily -->
            <svg v-if="l.k === 'p1'" class="plot" viewBox="56 80 623 672">
              <rect x="56" y="80" width="623" height="672" fill="#000" />
              <rect x="56" y="560" width="426" height="164" fill="#02060b" />
              <path :d="area(bandTop, bandLow)" fill="#020a06" />
              <path :d="area(bandIn, bandLow)" fill="#021115" />
              <path :d="area(bandIn, bandInLow)" fill="#02141a" />
              <g fill="none" stroke="#123126" stroke-dasharray="1 2"><path :d="line(bandTop)" /><path :d="line(bandIn)" /><path :d="line(bandInLow)" /><path :d="line(bandLow)" /></g>
              <path v-for="a in dayAxis" :key="a.y" :d="`M56 ${a.y + 0.5}H613`" stroke="#fff" stroke-opacity=".06" />
              <g stroke="#f23645" stroke-opacity=".7" stroke-dasharray="1 2"><path d="M56 475.500H613M56 532.500H613M56 698.500H613M56 703.500H613M56 711.500H613" /></g>
              <path d="M56 516H613" stroke="#2a7080" stroke-width="4" />
              <path d="M56 513H613" stroke="#f23645" stroke-width="2" stroke-dasharray="2 4" />
              <path d="M56 630.500H609" stroke="#5b35a5" stroke-width="3" stroke-dasharray="3 6" />
              <path :d="dayLong" fill="none" stroke="#0a6a58" />
              <path :d="dayMa" fill="none" stroke="#8a4a12" />
              <g v-for="(c, i) in dayCandles" :key="i" :fill="c.c"><rect :x="c.cx" :y="c.wy" width="1" :height="c.wh" /><rect :x="c.x" :y="c.y" :width="c.w" :height="c.h" /></g>
              <path v-for="(h, i) in dayLevels" :key="i" :d="`M${h[0]} ${h[1] + 1}H611`" :stroke="h[2]" stroke-width="2" stroke-dasharray="2 4" />
              <circle v-for="(d, i) in dayDots" :key="i" :cx="d[0]" :cy="d[1]" r="1.500" fill="#2e7d4f" />
              <path d="M159 384h37M87 549h37M105 533.500h18" stroke="#b8cff5" stroke-width="2" />
              <path d="M374 367.500h36" stroke="#b8cff5" />
              <path d="M447 239h18" stroke="#ff9800" stroke-width="2" />
              <path d="M56 710.500H600" stroke="#fff" stroke-width="3" stroke-dasharray="15 18" />
              <g fill="#fff" class="b13" text-anchor="end"><text x="605" y="295">5/8 H</text><text x="605" y="308">HH5/7</text><text x="605" y="323">HH 4/27</text></g>
              <g fill="#f5e642" class="b10" text-anchor="end"><text x="607" y="345">HH4/22</text><text x="607" y="349">100 v s 50 VOL</text><text x="607" y="376">H 4/13</text></g>
              <circle cx="482" cy="711" r="10" fill="#1a0f1f" stroke="#ab47bc" stroke-width="2" /><path d="M484 705l-5 7h6l-4 6" fill="none" stroke="#ab47bc" stroke-width="2" />
              <rect x="515" y="703" width="17" height="17" fill="none" stroke="#d500f9" stroke-width="2" /><text x="523" y="715" text-anchor="middle" fill="#d500f9" class="b12">E</text>
              <g stroke="#7b8798" stroke-dasharray="5 6"><path d="M56 174.500H613M482.500 80V724" /></g>
              <rect x="614" y="80" width="65" height="672" fill="#000" />
              <text v-for="a in dayAxis" :key="a.t" x="622" :y="a.y + 4" class="ax">{{ a.t }}</text>
              <path d="M613.500 80V752M56 724.500H679" stroke="#7a7a7a" />
              <template v-for="(g, i) in dayTags" :key="i"><rect :x="g.x" :y="g.y" :width="g.w" :height="g.h" rx="1" :fill="g.bg" /><text v-if="g.t" :x="g.x + (g.tx ?? 8)" :y="g.y + g.h / 2 + 4" :fill="g.fg" :class="g.b ? 'b12' : 't12'">{{ g.t }}</text></template>
              <text v-for="d in dayTimes" :key="d[0]" :x="d[0]" y="742" text-anchor="middle" class="ax">{{ d[1] }}</text>
              <rect x="444" y="725" width="77" height="23" rx="1" fill="#363a45" /><text x="482" y="743" text-anchor="middle" class="ax hi">5月 12 (火)</text>
            </svg>

            <!-- 15 seconds -->
            <svg v-else-if="l.k === 'p2'" class="plot" viewBox="58 756 619 641">
              <rect x="58" y="756" width="619" height="641" fill="#000" />
              <rect x="58" y="815" width="561" height="162" fill="#02040c" />
              <rect x="58" y="977" width="561" height="394" fill="#061022" />
              <path v-for="a in secAxis" :key="a.y" :d="`M58 ${a.y + 0.5}H619`" stroke="#fff" stroke-opacity=".06" />
              <rect v-for="(v, i) in secVol" :key="i" :x="v.x" :y="v.y" :width="v.w" :height="v.h" :fill="v.blue ? '#152e6e' : '#253a58'" />
              <path :d="secVolMa" fill="none" stroke="#8c8c50" stroke-opacity=".6" stroke-dasharray="1 1" />
              <g v-for="(c, i) in secCandles" :key="i" :fill="c.c" :fill-opacity="c.y > 990 ? .9 : 1"><rect :x="c.cx" :y="c.wy" width="1" :height="c.wh" /><rect :x="c.x" :y="c.y" :width="c.w" :height="c.h" /></g>
              <path :d="secVwap" stroke="#2962ff" />
              <rect x="379" y="756" width="240" height="221" fill="rgba(76,175,80,.17)" />
              <rect x="379" y="977" width="240" height="24" fill="rgba(76,175,120,.3)" />
              <rect x="379" y="1001" width="240" height="136" fill="rgba(180,35,95,.22)" />
              <path d="M379 1001.500H619" stroke="#7c8a8c" />
              <path d="M58 994.500H470" stroke="#a8a867" stroke-dasharray="6 5" />
              <rect x="50" y="997" width="345" height="10" fill="rgba(255,152,0,.25)" stroke="#f09a1c" stroke-width="2" />
              <path d="M410 1001l57-20M462 976l5 5-4 5" fill="none" stroke="#5d7a7d" stroke-dasharray="5 3" />
              <path d="M58 1222L619 1021" stroke="#4f9a98" stroke-width="2" />
              <path d="M66 1342h14v16h-7v-10h-7zM88 1342h11l-6 16h-9z" fill="#c9d4ea" /><circle cx="84" cy="1345" r="3" fill="#c9d4ea" />
              <rect x="521" y="764" width="52" height="19" fill="#20321f" /><rect x="574" y="764" width="35" height="19" fill="#2e7233" />
              <g class="b9" fill="#fff"><text x="525" y="777">Daily Gap</text><text x="579" y="777">6.12%</text></g>
              <g stroke="#7b8798" stroke-dasharray="5 6"><path d="M58 1211.500H598M542.500 756V1371" /></g>
              <text v-for="a in secAxis.slice(0, 17)" :key="a.t" x="628" :y="a.y + 3" class="ax">{{ a.t }}</text>
              <template v-for="(g, i) in secTags" :key="i"><rect :x="g.x" :y="g.y" :width="g.w" :height="g.h" rx="1" :fill="g.bg" /><text v-if="g.t" :x="g.x + (g.tx ?? 8)" :y="g.y + g.h / 2 + 4" :fill="g.fg" :class="g.b ? 'b12' : 't12'">{{ g.t }}</text></template>
              <circle cx="608.500" cy="1211.500" r="7.500" fill="none" stroke="#fff" /><path d="M604.500 1211.500h8M608.500 1207.500v8" stroke="#fff" />
              <rect x="58" y="1371" width="619" height="26" fill="#000" />
              <path d="M619.500 756V1397M58 1371.500H677" stroke="#8a8a8a" />
              <g class="ax" text-anchor="middle"><text x="77" y="1389">09:20</text><text x="262" y="1389">09:25</text><text x="379" y="1389">09:30</text><text x="475" y="1389">0</text><text x="614" y="1389">9:</text></g>
              <rect x="476" y="1372" width="134" height="23" rx="1" fill="#363a45" /><text x="485" y="1390" class="ax hi">5月 12 (火)</text><text x="554" y="1390" class="ax hi">09:39:15</text>
              <path d="M645.500 1379.500h7l4 6-4 6h-7l-4-6z" fill="none" stroke="#dbdbdb" /><circle cx="649" cy="1385.500" r="2.500" fill="none" stroke="#dbdbdb" />
            </svg>

            <!-- 2 minutes -->
            <svg v-else class="plot" viewBox="681 80 1830 1319">
              <rect x="681" y="80" width="1830" height="1319" fill="#000" />
              <rect x="681" y="1015" width="1026" height="356" fill="#02050e" /><rect x="681" y="1202" width="1026" height="65" fill="#061022" />
              <rect x="1706" y="454" width="741" height="249" fill="#02050e" /><rect x="1706" y="513" width="741" height="162" fill="#061022" />
              <path v-for="a in mainAxis" :key="a.y" :d="`M681 ${a.y}H2447`" stroke="#fff" stroke-opacity=".05" />
              <path d="M1691.500 80V1371" stroke="#15154a" stroke-dasharray="1 3" />
              <rect v-for="(v, i) in mainVol" :key="i" :x="v.x" :y="v.y" :width="v.w" :height="v.h" :fill="v.blue ? 'rgba(41,98,255,.34)' : 'rgba(103,138,170,.34)'" />
              <path :d="mainVolMa" fill="none" stroke="#8c8c50" stroke-opacity=".6" stroke-dasharray="1 1" />
              <circle v-for="(x, i) in weekDots" :key="i" :cx="x" cy="1267.500" r="2.500" :fill="x > 1666 && x < 1700 ? '#7d95d8' : '#a9adb5'" />
              <g v-for="(c, i) in mainCandles" :key="i" :fill="c.c"><rect :x="c.cx" :y="c.wy" width="1" :height="c.wh" /><rect :x="c.x" :y="c.y" :width="c.w" :height="c.h" /></g>
              <path :d="mainVwap" stroke="#2962ff" />
              <path d="M1117 1343.500H1501" stroke="#a8283a" /><path d="M1113 1358.500H1319" stroke="#a59c2c" /><text x="1501" y="1341" text-anchor="middle" class="t10" fill="#a8283a">1230</text>
              <rect x="842" y="991" width="104" height="182" fill="rgba(242,54,69,.32)" /><rect x="842" y="1147" width="37" height="28" fill="rgba(242,54,69,.36)" />
              <rect x="842" y="1174" width="104" height="197" fill="rgba(76,175,80,.26)" /><rect x="842" y="1175" width="37" height="106" fill="rgba(76,175,80,.28)" />
              <path d="M842 991.500h104M842 1147.500h37" stroke="#8b2530" /><path d="M842 1173.500h104" stroke="#5d5d5d" />
              <template v-for="f in fibs" :key="f[0]"><path :d="`M763 ${f[0] + 0.5}H1041`" :stroke="f[1]" stroke-opacity=".85" stroke-dasharray="1 2" /><text x="1048" :y="f[0] + 4" :fill="f[1]" class="t10 semi">{{ f[2] }}</text></template>
              <path d="M681 1165.500H981" stroke="#6b4208" /><path d="M681 1164H981V1167H681" fill="none" stroke="#ff9800" stroke-width="2" />
              <path d="M681 1024H2447" stroke="#b9f0f0" stroke-width="2" stroke-dasharray="2 4" />
              <path d="M1678 1202H2447" stroke="#00bcd4" stroke-width="2" />
              <path d="M681 1202.500H2447" stroke="#fbc02d" stroke-width="3" stroke-dasharray="3 6" />
              <path d="M681 1213.500H1687M1691 532.500H1917" stroke="#b3a955" stroke-dasharray="6 5" />
              <rect x="1904" y="331" width="162" height="182" fill="rgba(76,175,80,.17)" /><rect x="1904" y="513" width="162" height="9" fill="rgba(76,175,80,.32)" /><rect x="1904" y="522" width="162" height="50" fill="rgba(200,30,90,.22)" />
              <path d="M1904 331.500h162" stroke="#1d4424" /><path d="M1904 522.500h162" stroke="#8c8f98" />
              <rect x="1681" y="521" width="227" height="3" fill="#3a2300" stroke="#ff9800" stroke-width="2" /><rect x="1681" y="674" width="303" height="3" fill="#3a2300" stroke="#ff9800" stroke-width="2" />
              <path d="M1736 653L2099 459M2084 455l15 4-5 14" fill="none" stroke="#5aa699" stroke-width="2" />
              <path d="M1446 693L1469 487L1481 686L1515 504L1527 633L1567 488M1554 495l13-7 7 13" fill="none" stroke="#0a7463" stroke-width="2" />
              <circle cx="1710" cy="246" r="4" fill="#2e6f32" />
              <circle cx="1915" cy="1358" r="10" fill="#120a1a" stroke="#ab47bc" stroke-width="2" /><path d="M1917 1352l-5 7h6l-4 6" fill="none" stroke="#ab47bc" stroke-width="2" />
              <g stroke="#7b8798" stroke-dasharray="5 6"><path d="M681 599.500H2447M1937.500 80V1371" /></g>
              <rect x="2349" y="90" width="52" height="19" fill="#1a1c22" /><rect x="2402" y="90" width="35" height="19" fill="#2a6b2e" />
              <g class="b9" fill="#fff"><text x="2353" y="103">Daily Gap</text><text x="2407" y="103">6.12%</text></g>
              <text v-for="a in mainAxis" :key="a.t" x="2456" :y="a.y + 3" class="ax">{{ a.t }}</text>
              <template v-for="(g, i) in mainTags" :key="i"><rect :x="g.x" :y="g.y" :width="g.w" :height="g.h" rx="1" :fill="g.bg" /><text v-if="g.t" :x="g.x + (g.tx ?? 8)" :y="g.y + g.h / 2 + 4" :fill="g.fg" :class="g.b ? 'b12' : 't12'">{{ g.t }}</text></template>
              <rect x="681" y="1371" width="1830" height="28" fill="#000" />
              <path d="M2447.500 80V1399M681 1371.500H2511" stroke="#7a7a7a" />
              <text v-for="d in mainTimes" :key="d[0]" :x="d[0]" y="1389" text-anchor="middle" class="ax">{{ d[1] }}</text>
              <rect x="1879" y="1372" width="117" height="23" rx="1" fill="#363a45" /><text x="1888" y="1390" class="ax hi">5月 12 (火)</text><text x="1957" y="1390" class="ax hi">09:38</text>
            </svg>

            <div class="legend">
              <div class="row">
                <span class="logo"><svg viewBox="0 0 18 18"><path d="M4 8c0-3 2-4 4-4h6l-2 3H8z" fill="#00b8f0" /><path d="M5 14l2-5h6l-1 2H9l-1 3z" fill="#0b3a9c" /></svg></span>
                <span class="name">{{ l.name }}</span>
                <svg class="flag" viewBox="0 0 12 12"><path d="M0 0h12L9 6l3 6H0z" fill="#2979ff" /></svg>
                <span class="live"></span>
                <span class="vol">出来高<em :class="{ neg: l.down }">{{ l.v }}</em></span>
              </div>
              <div class="row two">
                <button class="cnt"><svg viewBox="0 0 8 6"><path d="M0 1l4 4 4-4" fill="none" stroke="#dbdbdb" /></svg>{{ l.n }}</button>
                <span class="sync"><svg viewBox="0 0 18 18"><path d="M4 8a5 5 0 0 1 9-2M14 10a5 5 0 0 1-9 2M11 6h3V3M7 12H4v3" fill="none" stroke="#a77dff" stroke-width="1.500" /></svg></span>
              </div>
            </div>
          </section>
        </div>

        <footer class="foot">
          <button v-for="r in ranges" :key="r" class="rng">{{ r }}</button>
          <i class="sep"></i>
          <button class="goto"><svg class="ic" viewBox="0 0 28 28"><path :d="I.goto" /></svg></button>
          <div class="strip">
            <span class="drag"><i v-for="n in 6" :key="n"></i></span>
            <button v-for="(d, i) in drawTools" :key="i"><svg class="ic" viewBox="0 0 28 28"><path :d="I[d]" /></svg></button>
          </div>
          <div class="status">
            <button class="rng">09:33:36 UTC+9</button>
            <i class="sep"></i>
            <button class="rng">配当調整</button>
            <button class="w38"><svg class="ic" viewBox="0 0 28 28"><path :d="I.expand" /></svg></button>
          </div>
        </footer>
      </main>

      <aside class="widgets">
        <button v-for="w in rightTop" :key="w"><svg class="ic" viewBox="0 0 28 28"><path :d="I[w]" /></svg><b v-if="w === 'clock'">99+</b></button>
        <span class="grow"></span>
        <button v-for="w in rightLow" :key="w"><svg class="ic" viewBox="0 0 28 28"><path :d="I[w]" /></svg></button>
        <button><span class="apps"><i v-for="n in 9" :key="n"></i></span></button>
        <hr />
        <button><svg class="ic" viewBox="0 0 28 28"><path :d="I.help" /></svg></button>
      </aside>
    </div>
  </div>
</template>

<style>
body { background: #2e2e2e; }
</style>

<style scoped>
.app { height: 100vh; display: flex; flex-direction: column; overflow: hidden; background: #2e2e2e; color: #dbdbdb; font: 13px/18px "Noto Sans", "Noto Sans CJK JP", sans-serif; }
.app * { box-sizing: border-box; }
button { font: inherit; color: inherit; background: none; border: 0; padding: 0; display: flex; align-items: center; justify-content: center; white-space: nowrap; flex: none; }
i, em { font-style: normal; }
.ic { width: 28px; height: 28px; fill: none; stroke: currentColor; stroke-width: 1; display: block; flex: none; }
.ic.small { width: 20px; height: 20px; }
.sep { width: 1px; height: 22px; background: #4a4a4a; flex: none; }
.dim { color: #8a8a8a; }

.tabs { height: 35px; background: #3d3d3d; display: flex; flex: none; align-items: stretch; }
.tab { width: 106px; display: flex; align-items: center; padding-left: 12px; color: #dbdbdb; text-decoration: none; position: relative; flex: none; }
.tab::after { content: ""; position: absolute; right: 0; top: 7px; width: 1px; height: 21px; background: #5a5a5a; }
.tab.active { background: #0f0f0f; border-radius: 6px 6px 0 0; }
.tab.active::after { display: none; }
.tab-in { width: 84px; display: flex; align-items: center; overflow: hidden; white-space: nowrap; font-weight: 500; -webkit-mask-image: linear-gradient(90deg, #000 60px, transparent 84px); mask-image: linear-gradient(90deg, #000 60px, transparent 84px); }
.coin { width: 18px; height: 18px; border-radius: 50%; display: flex; align-items: center; justify-content: center; font: 700 12px/18px "Noto Sans", sans-serif; margin-right: 4px; flex: none; }
.coin svg { width: 18px; height: 18px; }
.coin.tiny { font-size: 7px; }
.tri-u, .tri-d { width: 0; height: 0; border: 5px solid transparent; margin: 0 5px 0 6px; flex: none; }
.tri-u { border-top: 0; border-bottom: 9px solid #089981; }
.tri-d { border-bottom: 0; border-top: 9px solid #f23645; }
.chg { color: #089981; }
.chg.neg { color: #f23645; }
.under { position: absolute; left: 12px; bottom: 0; width: 82px; height: 3px; border-radius: 2px 2px 0 0; }
.add { width: 30px; color: #8a8a8a; }
.win { margin-left: auto; display: flex; align-items: center; }
.win button { width: 50px; }

.bar { height: 41px; background: #0f0f0f; display: flex; align-items: center; flex: none; padding: 3px 0 0 12px; }
.bar .on { background: #3d3d3d; border-radius: 6px; height: 34px; }
.avatar { width: 28px; height: 28px; position: relative; margin-right: 16px; flex: none; }
.avatar svg { width: 28px; height: 28px; }
.avatar b { position: absolute; left: 20px; top: -4px; width: 18px; height: 16px; border-radius: 8px; background: #f23645; color: #fff; font-size: 10px; line-height: 16px; text-align: center; }
.search { width: 127px; height: 28px; border-radius: 14px; background: #3d3d3d; display: flex; align-items: center; justify-content: space-between; padding: 0 2px 0 12px; margin-right: 6px; flex: none; }
.search input { width: 70px; border: 0; background: none; color: #dbdbdb; font: 700 13px/18px "Noto Sans", sans-serif; padding: 0; outline: 0; }
.search span { width: 24px; height: 24px; border-radius: 50%; background: #0f0f0f; display: flex; align-items: center; justify-content: center; }
.search .ic { width: 22px; height: 22px; }
.s1 { margin: 0 6px 0 7px; }
.w28 { width: 28px; } .w34 { width: 34px; } .w38 { width: 38px; } .w44 { width: 44px; }
.int { padding: 0 5px; min-width: 24px; margin-right: 2px; }
.lab { gap: 4px; padding: 0 8px 0 10px; font-size: 14px; }
.lab.tight { gap: 3px; padding: 0 6px 0 10px; }
.pre { display: flex; gap: 6px; margin: 0 14px 0 5px; }
.pre button { width: 22px; height: 22px; border: 1px solid #4a4a4a; border-radius: 50%; font-size: 10px; font-weight: 600; }
.right { margin-left: auto; display: flex; align-items: center; padding-right: 5px; }
.stack { flex-direction: column; font-size: 13px; line-height: 14px; padding: 0 5px; }
.stack em { color: #2962ff; font-size: 10px; line-height: 12px; }
.pill { height: 28px; border: 1px solid #4a4a4a; border-radius: 14px; background: #000; color: #fff; font-size: 14px; width: 79px; margin-left: 6px; }
.pill.white { background: #f2f2f2; color: #0f0f0f; width: 52px; margin-left: 8px; }

.body { flex: 1; min-height: 0; display: flex; gap: 4px; padding: 4px 0 2px; }
.side { width: 52px; background: #0f0f0f; border-radius: 0 4px 4px 0; padding: 6px 0 20px; display: flex; flex-direction: column; align-items: center; flex: none; }
.side button { width: 34px; height: 34px; margin: 2px 0; border-radius: 6px; }
.side .on { background: #3d3d3d; }
.side .lit { background: #f2f2f2; color: #0f0f0f; }
.side .end { margin-top: auto; }
.side hr { width: 36px; height: 1px; border: 0; background: #4a4a4a; margin: 6px 0; flex: none; }

.center { flex: 1; min-width: 0; display: flex; flex-direction: column; gap: 1px; }
.panes { flex: 1; min-height: 0; display: grid; grid-template-columns: minmax(0, 623fr) minmax(0, 1830fr); grid-template-rows: minmax(0, 672fr) minmax(0, 645fr); gap: 2px; }
.pane { position: relative; overflow: hidden; background: #000; border-radius: 4px; }
.p1 { grid-area: 1 / 1; }
.p2 { grid-area: 2 / 1; border: 2px solid #8f8f8f; }
.p3 { grid-area: 1 / 2 / span 2; }
.plot { position: absolute; inset: 0; width: 100%; height: 100%; display: block; }
.plot text { font-family: "Noto Sans", "Noto Sans CJK JP", sans-serif; }
.ax { font-size: 12px; fill: #dbdbdb; font-weight: 500; }
.ax.hi { fill: #fff; }
.t12 { font-size: 12px; }
.t10 { font-size: 10px; }
.semi { font-weight: 600; }
.b13 { font-size: 13px; font-weight: 700; }
.b12 { font-size: 12px; font-weight: 700; }
.b10 { font-size: 10px; font-weight: 700; }
.b9 { font-size: 9px; font-weight: 700; }

.legend { position: absolute; left: 9px; top: 7px; }
.p2 .legend { left: 7px; top: 5px; }
.row { display: flex; align-items: center; height: 20px; white-space: nowrap; }
.row.two { margin-top: 7px; }
.logo { width: 18px; height: 18px; border-radius: 50%; background: #f0f3fa; margin-right: 5px; }
.logo svg { width: 18px; height: 18px; display: block; }
.name { font-size: 15px; line-height: 20px; }
.flag { width: 12px; height: 12px; margin: 0 12px; }
.live { width: 18px; height: 18px; border-radius: 50%; background: #42bda8; border: 5px solid #06251f; margin-right: 8px; }
.vol { font-size: 13px; }
.vol em { color: #089981; }
.vol em.neg { color: #f23645; }
.cnt { width: 32px; height: 21px; border: 1px solid #4a4a4a; border-radius: 3px; font-size: 12px; gap: 6px; margin-right: 16px; background: #000; }
.cnt svg { width: 8px; height: 6px; }
.sync { width: 18px; height: 18px; border-radius: 50%; background: #2a1c42; }
.sync svg { width: 18px; height: 18px; display: block; }

.foot { height: 38px; background: #0f0f0f; border-radius: 4px; display: flex; align-items: center; flex: none; padding-left: 7px; }
.rng { padding: 0 7px; }
.foot .sep { margin: 0 3px; }
.goto { width: 40px; margin-right: 15px; }
.strip { height: 38px; background: #1f1f1f; border-radius: 6px; display: flex; align-items: center; }
.strip button { width: 38px; }
.drag { display: grid; grid-template-columns: 2px 2px; gap: 4px; width: 24px; padding-left: 8px; }
.drag i { width: 2px; height: 2px; background: #5a5a5a; }
.status { margin-left: auto; display: flex; align-items: center; padding-right: 3px; font-size: 14px; }

.widgets { width: 45px; background: #0f0f0f; border-radius: 4px 0 0 4px; display: flex; flex-direction: column; align-items: center; padding: 2px 0 1px; flex: none; }
.widgets button { width: 44px; height: 46px; position: relative; }
.widgets b { position: absolute; left: 9px; top: 4px; height: 16px; min-width: 30px; padding: 0 3px; border-radius: 8px; background: #f23645; color: #fff; font-size: 11px; line-height: 16px; }
.grow { flex: 1; }
.widgets hr { width: 33px; height: 1px; border: 0; background: #4a4a4a; margin: 5px 0; flex: none; }
.apps { width: 34px; height: 34px; border-radius: 50%; background: #f2f2f2; display: grid; grid-template-columns: repeat(3, 4px); grid-template-rows: repeat(3, 4px); gap: 3px; place-content: center; }
.apps i { background: #0f0f0f; border-radius: 1px; }
</style>
